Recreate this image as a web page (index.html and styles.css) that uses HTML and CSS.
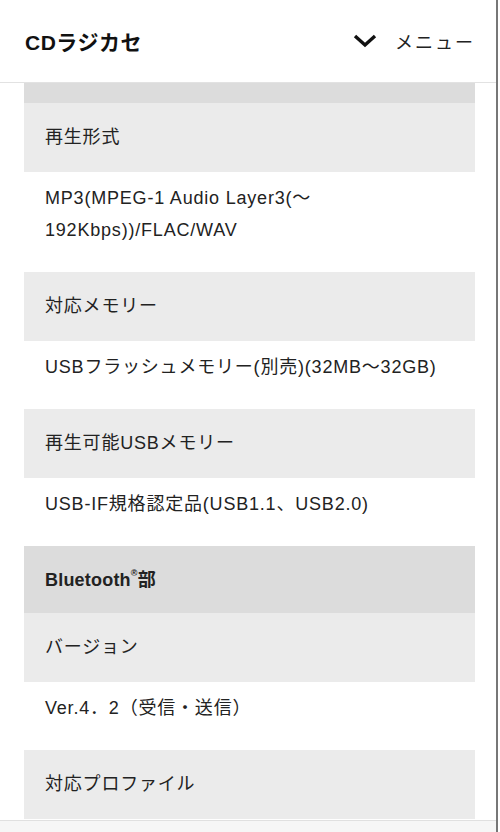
FILE: index.html
```html
<html lang="ja">

<head>
    <title>CDラジカセ</title>
    <link rel="stylesheet" href="styles.css">
</head>

<body>
    <div class="page">
        <header class="top">
            <h1>CDラジカセ</h1>
            <div class="menu">
                <svg class="chev" width="24" height="14" viewBox="0 0 24 14">
                    <path d="M2 2 L12 11 L22 2" fill="none" stroke="#111" stroke-width="3.4" />
                </svg>
                <span>メニュー</span>
            </div>
        </header>
        <div class="spec">
            <div class="sec tail"></div>
            <dl>
                <dt>再生形式</dt>
                <dd>MP3(MPEG-1 Audio Layer3(〜<br>192Kbps))/FLAC/WAV</dd>
                <dt>対応メモリー</dt>
                <dd>USBフラッシュメモリー(別売)(32MB〜32GB)</dd>
                <dt>再生可能USBメモリー</dt>
                <dd>USB-IF規格認定品(USB1.1、USB2.0)</dd>
            </dl>
            <div class="sec">Bluetooth<sup>®</sup>部</div>
            <dl>
                <dt>バージョン</dt>
                <dd>Ver.4．2（受信・送信）</dd>
                <dt>対応プロファイル</dt>
            </dl>
        </div>
        <div class="bottom"></div>
    </div>
</body>

</html>
```

FILE: styles.css
```css
body {
    margin: 0;
    background: white;
    color: #222;
    font-family: "Liberation Sans", "Noto Sans CJK JP", sans-serif;
}

.page {
    width: 496px;
    height: 832px;
    border-right: 2px solid #777;
    overflow: hidden;
    position: relative;
}

.top {
    height: 82px;
    border-bottom: 1px solid #e2e2e2;
    display: flex;
    align-items: center;
    justify-content: space-between;
    padding: 0 21px 0 25px;
}

.top h1 {
    margin: 0;
    font-size: 21px;
    font-weight: bold;
    color: #111;
    letter-spacing: 0.5px;
}

.menu {
    display: flex;
    align-items: center;
    gap: 18px;
    font-size: 18px;
    color: #222;
    letter-spacing: 2px;
}

.chev {
    display: block;
}

.spec {
    margin: 0 21px 0 24px;
    letter-spacing: 0.8px;
}

.sec {
    background: #dcdcdc;
    font-weight: bold;
    font-size: 18px;
    line-height: 32px;
    padding: 18px 21px 17px;
    letter-spacing: 0.2px;
}

.sec sup {
    font-size: 9px;
    vertical-align: 10px;
    line-height: 0;
}

.sec.tail {
    height: 20px;
    padding: 0;
}

dl {
    margin: 0;
}

dt {
    background: #ebebeb;
    font-size: 18px;
    line-height: 32px;
    padding: 18px 21px 19px;
}

dd {
    margin: 0;
    font-size: 18px;
    line-height: 32px;
    padding: 10px 21px 26px;
}

.bottom {
    position: absolute;
    left: 0;
    right: 0;
    bottom: 0;
    height: 11px;
    background: #f6f6f6;
    border-top: 1px solid #e0e0e0;
}
```
